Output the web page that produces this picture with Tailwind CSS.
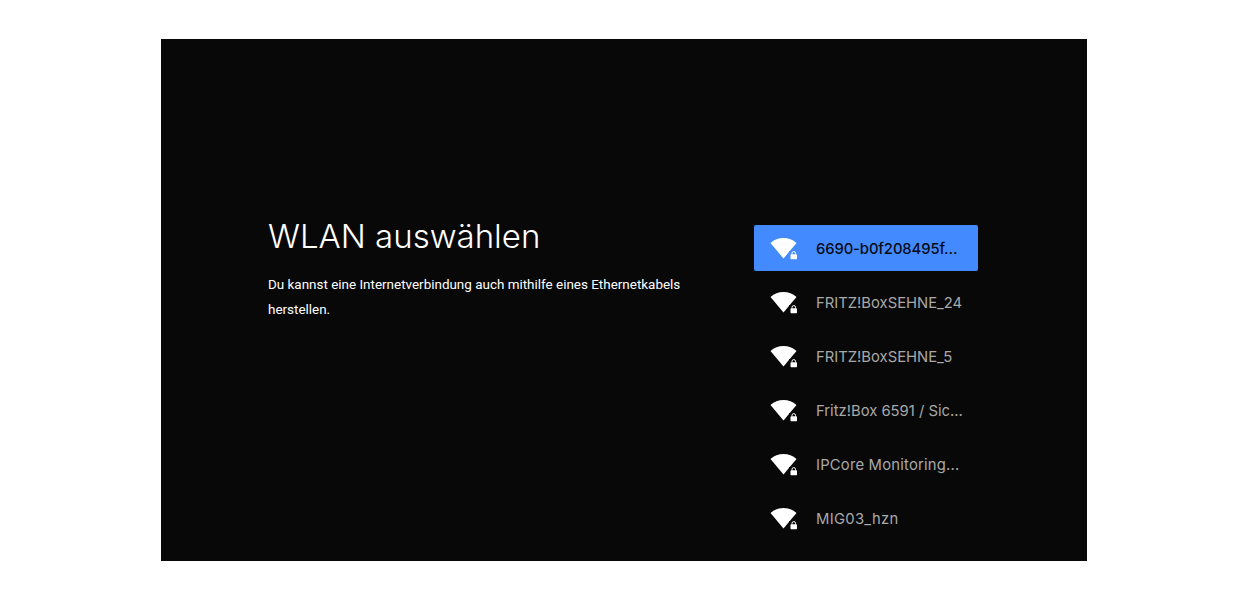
<!DOCTYPE html>
<html lang="de">
<head>
  <meta charset="UTF-8" />
  <title>WLAN auswählen</title>
  <script src="https://cdn.jsdelivr.net/npm/@tailwindcss/browser@4"></script>
</head>
<body class="bg-white h-[600px] overflow-hidden pt-[39px]">
  <svg class="hidden">
    <symbol id="wifi" viewBox="0 0 30 24">
      <path d="M1.500 7Q7 2 14.500 2T27.500 7L14.500 22.500Z" fill="#fff" />
      <path d="M20 15h9v9.500h-9Z" fill="currentColor" />
      <rect x="21.500" y="18.300" width="6.500" height="5" rx="0.700" fill="#fff" />
      <path d="M23 18.500v-1.200a1.750 1.750 0 0 1 3.500 0v1.200" fill="none" stroke="#fff" stroke-width="1" />
    </symbol>
  </svg>

  <main class="mx-auto w-[926px] h-[522px] bg-[#080809] flex">
    <section class="w-[593px] pl-[107px] pt-[174px] shrink-0">
      <h1 class="font-['Inter',sans-serif] font-light text-[33px] leading-[46px] text-white">WLAN auswählen</h1>
      <p class="mt-[13px] w-[440px] font-['Roboto',sans-serif] text-[13.450px] leading-[25px] text-white">Du kannst eine Internetverbindung auch mithilfe eines Ethernetkabels<br />herstellen.</p>
    </section>

    <ul class="w-[224px] pt-[186px] flex flex-col gap-2 font-['Inter',sans-serif] text-[14.800px] text-[#a8a8a8]">
      <li class="h-[46px] flex items-center pl-[15px] rounded-[2px] bg-[#448aff] text-[#060b16] font-medium">
        <svg class="w-[30px] h-[24px] shrink-0 text-[#448aff]"><use href="#wifi" /></svg>
        <span class="ml-[17px] pt-[2px] whitespace-nowrap tracking-[-0.100px]">6690-b0f208495f...</span>
      </li>
      <li class="h-[46px] flex items-center pl-[15px] text-[#080809]">
        <svg class="w-[30px] h-[24px] shrink-0"><use href="#wifi" /></svg>
        <span class="ml-[17px] pt-[2px] whitespace-nowrap text-[#a8a8a8]">FRITZ!BoxSEHNE_24</span>
      </li>
      <li class="h-[46px] flex items-center pl-[15px] text-[#080809]">
        <svg class="w-[30px] h-[24px] shrink-0"><use href="#wifi" /></svg>
        <span class="ml-[17px] pt-[2px] whitespace-nowrap text-[#a8a8a8]">FRITZ!BoxSEHNE_5</span>
      </li>
      <li class="h-[46px] flex items-center pl-[15px] text-[#080809]">
        <svg class="w-[30px] h-[24px] shrink-0"><use href="#wifi" /></svg>
        <span class="ml-[17px] pt-[2px] whitespace-nowrap text-[#a8a8a8]">Fritz!Box 6591 / Sic...</span>
      </li>
      <li class="h-[46px] flex items-center pl-[15px] text-[#080809]">
        <svg class="w-[30px] h-[24px] shrink-0"><use href="#wifi" /></svg>
        <span class="ml-[17px] pt-[2px] whitespace-nowrap tracking-[0.200px] text-[#a8a8a8]">IPCore Monitoring...</span>
      </li>
      <li class="h-[46px] flex items-center pl-[15px] text-[#080809]">
        <svg class="w-[30px] h-[24px] shrink-0"><use href="#wifi" /></svg>
        <span class="ml-[17px] pt-[2px] whitespace-nowrap tracking-[0.300px] text-[#a8a8a8]">MIG03_hzn</span>
      </li>
    </ul>
  </main>
</body>
</html>
